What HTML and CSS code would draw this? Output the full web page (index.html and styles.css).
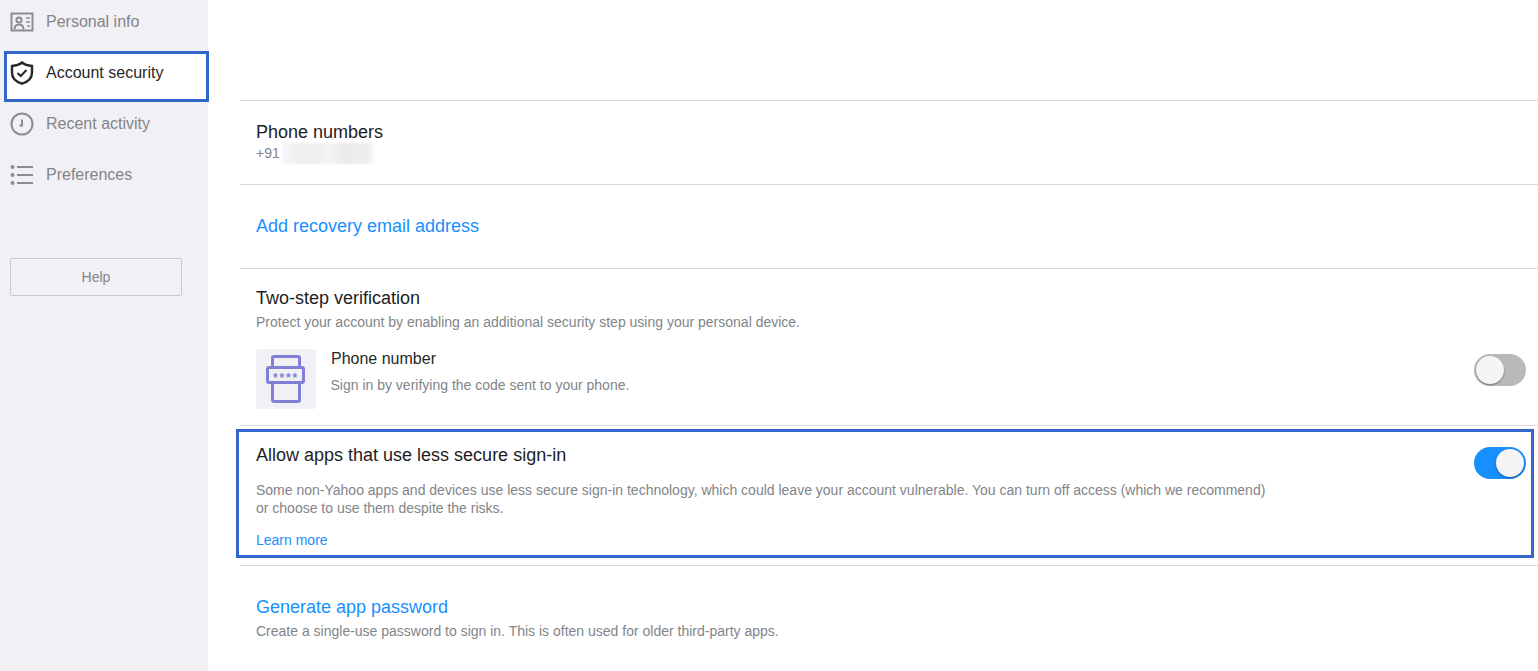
FILE: index.html
```html
<!DOCTYPE html>
<html lang="en">
<head>
<meta charset="utf-8">
<title>Account security</title>
<link rel="stylesheet" href="styles.css">
</head>
<body>
<div class="app">
  <aside class="sidebar">
    <nav class="nav">
      <a class="nav-item">
        <svg class="nav-icon" viewBox="0 0 24 24" fill="none" stroke="#8a8d91" stroke-width="2"><rect x="1.500" y="3.500" width="21" height="17"/><circle cx="9" cy="10" r="2.600"/><path d="M4.500 19.500c0-3.500 2-5 4.500-5s4.500 1.500 4.500 5"/><path d="M16 8h4M16 12h4M17 16h3" stroke-width="1.600"/></svg>
        <span>Personal info</span>
      </a>
      <a class="nav-item active">
        <svg class="nav-icon" viewBox="0 0 24 24" fill="none" stroke="#26282a" stroke-width="2.400"><path d="M12 1.500C14.500 3.600 17.800 4.700 22 5v6.500c0 5.500-3.800 9.300-10 11.200C5.800 20.800 2 17 2 11.500V5c4.200-.3 7.500-1.400 10-3.500z"/><path d="M7.500 12l3.200 3 5.800-6" stroke-width="2"/></svg>
        <span>Account security</span>
      </a>
      <a class="nav-item">
        <svg class="nav-icon" viewBox="0 0 24 24" fill="none" stroke="#8a8d91" stroke-width="2"><circle cx="12" cy="12" r="10.500"/><path d="M12 7.500V13.500H9.500"/></svg>
        <span>Recent activity</span>
      </a>
      <a class="nav-item">
        <svg class="nav-icon" viewBox="0 0 24 24" fill="none" stroke="#8a8d91" stroke-width="2"><path d="M7 4h16M7 12h16M7 20h16"/><g fill="#8a8d91" stroke="none"><circle cx="2.500" cy="4" r="2"/><circle cx="2.500" cy="12" r="2"/><circle cx="2.500" cy="20" r="2"/></g></svg>
        <span>Preferences</span>
      </a>
    </nav>
    <button class="help" type="button">Help</button>
  </aside>
  <main class="main">
    <section class="row row-phone">
      <h2 class="title">Phone numbers</h2>
      <p class="desc phone">+91 <span class="blur"></span></p>
    </section>
    <section class="row row-link">
      <a class="link-title">Add recovery email address</a>
    </section>
    <section class="row row-two">
      <h2 class="title">Two-step verification</h2>
      <p class="desc">Protect your account by enabling an additional security step using your personal device.</p>
      <div class="method">
        <div class="tile">
          <svg width="40" height="48" viewBox="0 0 40 48" fill="none" stroke="#8280d6" stroke-width="3"><path d="M6.500 12.500V3a1.500 1.500 0 0 1 1.500-1.500h24A1.500 1.500 0 0 1 33.500 3v9.500M6.500 27.500V45a1.500 1.500 0 0 0 1.500 1.500h24a1.500 1.500 0 0 0 1.500-1.500V27.500"/><rect x="1.500" y="12.500" width="36" height="15" rx="1.500"/><text x="20" y="27" text-anchor="middle" class="stars">****</text></svg>
        </div>
        <div class="method-text">
          <div class="method-name">Phone number</div>
          <p class="desc sign-desc">Sign in by verifying the code sent to your phone.</p>
        </div>
        <span class="toggle"><span class="knob"></span></span>
      </div>
    </section>
    <section class="row row-secure">
      <div class="secure-head">
        <h2 class="title">Allow apps that use less secure sign-in</h2>
        <span class="toggle on"><span class="knob"></span></span>
      </div>
      <p class="desc secure-text">Some non-Yahoo apps and devices use less secure sign-in technology, which could leave your account vulnerable. You can turn off access (which we recommend) or choose to use them despite the risks.</p>
      <a class="learn">Learn more</a>
      <div class="outline"></div>
    </section>
    <section class="row row-app">
      <a class="link-title">Generate app password</a>
      <p class="desc app-desc">Create a single-use password to sign in. This is often used for older third-party apps.</p>
    </section>
  </main>
</div>
</body>
</html>
```
FILE: styles.css
```css
*, *::before { box-sizing: border-box; }
html, body { margin: 0; height: 100%; overflow: hidden; background: #fff; }
body { font-family: "Liberation Sans", Arial, sans-serif; color: #26282a; }
.app { display: flex; height: 671px; }
.sidebar { width: 208px; flex: none; background: #f0f0f5; padding-left: 4px; }
.nav { display: flex; flex-direction: column; margin-top: -4px; }
.nav-item { height: 51px; display: flex; align-items: center; gap: 12px; padding-left: 6px; font-size: 16px; color: #828589; position: relative; }
.nav-item.active { color: #26282a; }
.nav-item.active::before { content: ""; position: absolute; left: 0; right: -1px; top: 4px; height: 51px; background: #fff; border: 3px solid #3366cc; }
.nav-item > * { position: relative; }
.nav-icon { width: 24px; height: 24px; flex: none; }
.help { display: block; width: 172px; height: 38px; margin: 58px 0 0 6px; background: #f0f0f5; border: 1px solid #c8c9cd; border-radius: 2px; font: 14px "Liberation Sans", Arial, sans-serif; color: #828589; }
.main { flex: 1; padding: 100px 0 0 32px; min-width: 0; }
.row { border-top: 1px solid #d8d8da; padding-left: 16px; position: relative; }
.row-phone { height: 84px; padding-top: 21px; }
.row-link { height: 84px; padding-top: 31px; }
.row-two { height: 157px; padding-top: 19px; }
.row-secure { height: 140px; padding-top: 19px; }
.row-app { padding-top: 31px; }
.title { margin: 0; font-size: 18px; line-height: 20px; font-weight: 400; color: #1d1d1f; }
.desc { margin: 0; font-size: 14px; line-height: 20px; color: #828589; }
.row-two > .desc { margin-top: 4px; }
.phone { margin-top: 1px; }
.blur { display: inline-block; width: 92px; height: 21px; vertical-align: -6px; margin-left: -2px; background: linear-gradient(90deg, #f9f9f9, #f0f0f1 12%, #eeeeef 38%, #f4f4f5 48%, #ebebec 68%, #eeeeef 92%, #f9f9f9); filter: blur(1px); }
.link-title { font-size: 18px; line-height: 20px; color: #188fff; display: block; }
.app-desc { margin-top: 4px; }
.method { display: flex; align-items: flex-start; margin-top: 17px; padding-right: 12px; }
.tile { width: 60px; height: 60px; background: #f0f0f5; border-radius: 3px; display: flex; align-items: center; justify-content: center; flex: none; }
.stars { font: 700 12px "Liberation Sans", sans-serif; fill: #8280d6; stroke: none; letter-spacing: 1.800px; }
.method-text { margin-left: 15px; flex: 1; }
.method-name { font-size: 16px; line-height: 20px; color: #26282a; margin-bottom: 6px; }
.sign-desc { margin-left: -0.500px; }
.toggle { width: 52px; height: 32px; border-radius: 16px; background: #b9b9bb; display: flex; align-items: center; padding: 2px; flex: none; margin-top: 5px; }
.knob { width: 28px; height: 28px; border-radius: 50%; background: #f5f5f5; box-shadow: 0 1px 2px rgba(0,0,0,.4); }
.toggle.on { background: #188fff; justify-content: flex-end; margin-top: 2px; }
.secure-head { display: flex; justify-content: space-between; align-items: flex-start; padding-right: 12px; }
.secure-text { width: 1020px; margin-top: 2px; line-height: 18px; }
.learn { display: block; font-size: 14px; line-height: 20px; color: #188fff; margin-top: 13px; }
.outline { position: absolute; left: -4px; right: 4px; top: 3px; height: 129px; border: 3px solid #3366cc; pointer-events: none; }
```
